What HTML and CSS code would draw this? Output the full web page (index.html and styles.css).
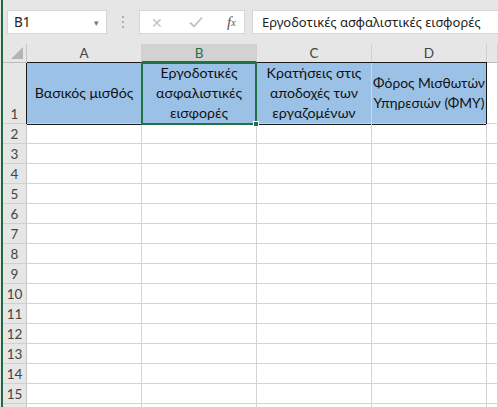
FILE: index.html
```html
<!DOCTYPE html>
<html lang="el">
<head>
  <meta charset="UTF-8" />
  <title>Φύλλο εργασίας</title>
  <link rel="stylesheet" href="styles.css">
</head>
<body>
  <div class="app">

    <div class="formula-bar">
      <div class="name-box">
        <span>B1</span>
        <span class="dropdown">&#9662;</span>
      </div>
      <div class="grip">
        <span></span><span></span><span></span>
      </div>
      <div class="fx-buttons">
        <span class="fx-btn">&#10005;</span>
        <span class="fx-btn">
          <svg width="14" height="12" viewBox="0 0 14 12"><path d="M1 6.5 L5 10.5 L13 1.5" fill="none" stroke="#c2c2c2" stroke-width="1.8"/></svg>
        </span>
        <span class="fx-btn fx"><i>f</i><sub>x</sub></span>
      </div>
      <div class="formula-input">Εργοδοτικές ασφαλιστικές εισφορές</div>
    </div>

    <div class="sheet">
      <div class="corner"><span class="tri"></span></div>
      <div class="col-head">A</div>
      <div class="col-head selected">B</div>
      <div class="col-head">C</div>
      <div class="col-head">D</div>
      <div class="col-head"></div>

      <div class="row-head first r1 c1">1</div>
      <div class="cell title r1 c2">Βασικός μισθός</div>
      <div class="cell title r1 c3">Εργοδοτικές ασφαλιστικές εισφορές</div>
      <div class="cell title r1 c4">Κρατήσεις στις αποδοχές των εργαζομένων</div>
      <div class="cell title nowrap r1 c5">Φόρος Μισθωτών<br>Υπηρεσιών (ΦΜΥ)</div>
      <div class="cell r1 c6"></div>
      <div class="range-outline"></div>
      <div class="active-cell"><span class="handle"></span></div>
    </div>

  </div>

  <script>
    // fill rows 2..16 with empty cells (16 is only peeking in at the bottom)
    const sheet = document.querySelector(".sheet");
    for (let r = 2; r <= 16; r++) {
      const head = document.createElement("div");
      head.className = "row-head";
      if (r < 16) head.textContent = r;
      sheet.appendChild(head);
      for (let c = 0; c < 5; c++) {
        const cell = document.createElement("div");
        cell.className = "cell";
        sheet.appendChild(cell);
      }
    }
  </script>
</body>
</html>
```

FILE: styles.css
```css
:root {
  --excel-green: #217346;
  --grid: #d4d4d4;
  --chrome: #e6e6e6;
  --head: #e6e6e6;
  --blue-fill: #9bc2e6;
}

* {
  box-sizing: border-box;
}

body {
  margin: 0;
  width: 498px;
  height: 407px;
  overflow: hidden;
  background: var(--chrome);
  font-family: 'Noto Sans', 'Open Sans', sans-serif;
}

.app {
  margin-left: 1px;
  height: 407px;
  overflow: hidden;
  border-left: 2px solid #1f6b40;
  display: flex;
  flex-direction: column;
}

/* formula bar */

.formula-bar {
  height: 44px;
  flex-shrink: 0;
  display: flex;
  align-items: flex-start;
  padding-top: 10px;
  padding-left: 4px;
}

.name-box {
  width: 100px;
  height: 24px;
  background: #fff;
  border: 1px solid #d6d6d6;
  display: flex;
  align-items: center;
  justify-content: space-between;
  padding: 0 7px 0 6px;
  font-size: 13.5px;
  color: #222;
}

.dropdown {
  font-size: 9px;
  color: #777;
}

.grip {
  width: 32px;
  height: 24px;
  display: flex;
  flex-direction: column;
  align-items: center;
  justify-content: center;
  gap: 3px;
}

.grip span {
  width: 2px;
  height: 2px;
  background: #b0b0b0;
}

.fx-buttons {
  width: 106px;
  height: 24px;
  background: #fff;
  border: 1px solid #d6d6d6;
  display: flex;
  align-items: center;
  padding-left: 11px;
}

.fx-btn {
  width: 38px;
  color: #c2c2c2;
  font-size: 14px;
  display: flex;
  align-items: center;
}

.fx-btn.fx {
  width: auto;
  color: #555;
  font-family: 'Liberation Serif', serif;
  font-size: 15px;
  padding-left: 0;
}

.fx-btn.fx sub {
  font-size: 10px;
  font-style: italic;
}

.formula-input {
  flex: 1;
  min-width: 0;
  height: 24px;
  margin-left: 7px;
  background: #fff;
  border: 1px solid #d6d6d6;
  border-right: none;
  padding-left: 9px;
  font-size: 13px;
  line-height: 22px;
  color: #222;
  white-space: nowrap;
  overflow: hidden;
}

/* sheet grid */

.sheet {
  flex: 1;
  background: #fff;
  display: grid;
  grid-template-columns: 24px repeat(4, 115px) 1fr;
  grid-template-rows: 19px 61px;
  grid-auto-rows: 20px;
  font-family: 'Lato', 'Open Sans', sans-serif;
  font-size: 14.2px;
  color: #111;
}

.r1 { grid-row: 2; }
.c1 { grid-column: 1; }
.c2 { grid-column: 2; }
.c3 { grid-column: 3; }
.c4 { grid-column: 4; }
.c5 { grid-column: 5; }
.c6 { grid-column: 6; }

.corner,
.col-head,
.row-head {
  background: var(--head);
  color: #444;
  font-size: 13.5px;
  border-right: 1px solid #c6c6c6;
  border-bottom: 1px solid #bdbdbd;
}

.corner {
  position: relative;
}

.corner .tri {
  position: absolute;
  right: 3px;
  bottom: 3px;
  width: 0;
  height: 0;
  border-left: 12px solid transparent;
  border-bottom: 12px solid #b4b4b4;
}

.col-head {
  display: flex;
  align-items: center;
  justify-content: center;
  border-right-color: #d0d0d0;
}

.col-head.selected {
  background: #d2d2d2;
  color: var(--excel-green);
  border-bottom: 2px solid var(--excel-green);
}

.row-head {
  display: flex;
  align-items: center;
  justify-content: center;
  border-bottom-color: #d0d0d0;
}

.row-head.first {
  align-items: flex-end;
  padding-bottom: 1px;
}

.cell {
  border-right: 1px solid var(--grid);
  border-bottom: 1px solid var(--grid);
}

.cell.title {
  background: var(--blue-fill);
  display: flex;
  align-items: center;
  justify-content: center;
  text-align: center;
  line-height: 20px;
  padding: 0 1px;
}

.cell.nowrap {
  white-space: nowrap;
  font-size: 13.8px;
}

.range-outline {
  grid-column: 2 / 6;
  grid-row: 2;
  border: 1px solid #1a1a1a;
  margin: -1px 0 -1px -1px;
  pointer-events: none;
}

.active-cell {
  grid-column: 3;
  grid-row: 2;
  position: relative;
  border: 2px solid var(--excel-green);
  margin: -1px 0 -1px -1px;
}

.active-cell .handle {
  position: absolute;
  right: -4px;
  bottom: -4px;
  width: 6px;
  height: 6px;
  background: var(--excel-green);
  border: 1px solid #fff;
}
```
